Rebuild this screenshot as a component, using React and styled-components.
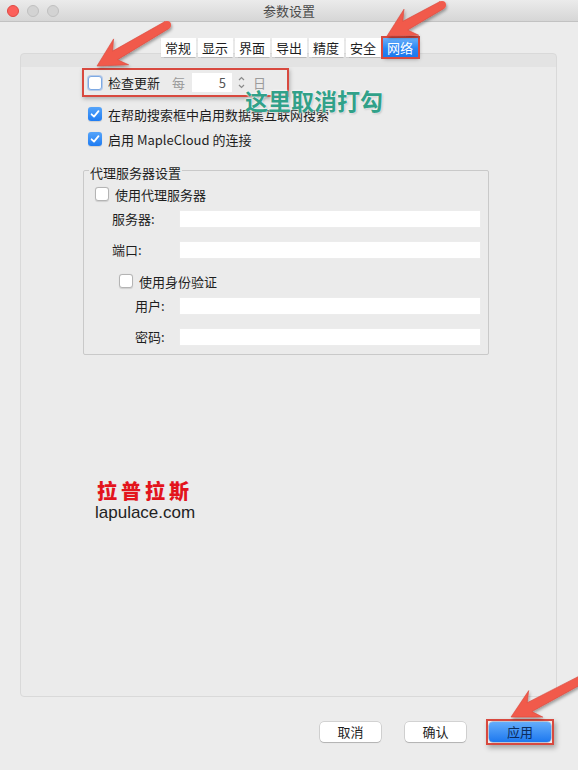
import React from "react";
import styled, { createGlobalStyle } from "styled-components";

const GlobalStyle = createGlobalStyle`
  html, body { margin: 0; padding: 0; background: #ececec; }
`;

const Window = styled.div`
  position: relative;
  width: 578px;
  height: 770px;
  overflow: hidden;
  display: flex;
  flex-direction: column;
  background: #ececec;
  font-family: "Noto Sans CJK SC", "Liberation Sans", sans-serif;
  font-size: 13px;
  color: #1e1e1e;
`;

const TitleBar = styled.div`
  height: 22px;
  box-sizing: border-box;
  display: grid;
  grid-template-columns: 1fr auto 1fr;
  align-items: center;
  background: linear-gradient(#ebebeb, #d6d6d6);
  border-bottom: 1px solid #c2c2c2;
`;

const Lights = styled.div`
  display: flex;
  gap: 8px;
  padding-left: 7px;
`;

const Light = styled.span`
  width: 12px;
  height: 12px;
  box-sizing: border-box;
  border-radius: 50%;
  background: ${(p) => (p.$red ? "#fc605b" : "#d3d3d3")};
  border: 1px solid ${(p) => (p.$red ? "#de4943" : "#c0c0c0")};
`;

const Title = styled.div`
  font-size: 13px;
  color: #4a4a4a;
  line-height: 22px;
`;

const Main = styled.div`
  flex: 1;
  display: flex;
  flex-direction: column;
  padding: 0 21px 0 20px;
`;

const TabRow = styled.div`
  position: relative;
  z-index: 1;
  display: flex;
  justify-content: center;
  gap: 2px;
  margin-top: 16px;
  height: 19px;
  padding-left: 1px;
`;

const Tab = styled.div`
  width: 35px;
  height: 19px;
  line-height: 19px;
  text-align: center;
  font-size: 13px;
  background: ${(p) => (p.$active ? "linear-gradient(#6bb1fb, #2a86f4 55%, #1c78ee)" : "#ffffff")};
  color: ${(p) => (p.$active ? "#ffffff" : "#1e1e1e")};
  box-shadow: ${(p) =>
    p.$active
      ? "0 0 0 2px #d8493f, 1px 2px 4px rgba(0,0,0,0.35)"
      : "0 0.5px 1px rgba(0,0,0,0.18)"};
`;

const Panel = styled.div`
  margin-top: -4px;
  height: 644px;
  box-sizing: border-box;
  border: 1px solid #d9d9d9;
  border-radius: 4px;
  background: linear-gradient(#e3e3e3 0, #e3e3e3 13px, #ebebeb 13px);
  padding: 14px 0 0 61px;
  display: flex;
  flex-direction: column;
`;

const Highlight = styled.div`
  display: flex;
  align-items: center;
  width: 207px;
  height: 29px;
  box-sizing: border-box;
  border: 2px solid #d8493f;
  box-shadow: 1px 2px 4px rgba(0, 0, 0, 0.25);
  padding-left: 4px;
`;

const CheckRow = styled.div`
  display: flex;
  align-items: center;
  height: 20px;
  padding-left: ${(p) => p.$indent || 0}px;
  margin-top: ${(p) => p.$top || 0}px;
`;

const Box = styled.span`
  flex: none;
  width: 14px;
  height: 14px;
  box-sizing: border-box;
  border-radius: 3px;
  display: flex;
  align-items: center;
  justify-content: center;
  background: ${(p) => (p.$checked ? "linear-gradient(#55a4fa, #1f7cf2)" : "#ffffff")};
  border: ${(p) =>
    p.$checked ? "none" : p.$focus ? "1px solid #7da9e3" : "1px solid #b4b4b4"};
  box-shadow: ${(p) =>
    p.$focus ? "0 0 0 1px rgba(120,165,230,0.45)" : "0 0.5px 1px rgba(0,0,0,0.12)"};
`;

const Label = styled.span`
  margin-left: 6px;
  white-space: nowrap;
`;

const Muted = styled.span`
  color: #9b9b9b;
  margin-left: ${(p) => p.$left || 0}px;
`;

const NumberBox = styled.div`
  margin-left: 7px;
  width: 40px;
  height: 19px;
  box-sizing: border-box;
  line-height: 19px;
  background: #fff;
  text-align: right;
  padding-right: 6px;
  color: #555;
`;

const Stepper = styled.div`
  margin-left: 4px;
  width: 11px;
  height: 19px;
  display: flex;
  align-items: center;
  justify-content: center;
`;

const Group = styled.fieldset`
  margin: 11px 0 0 1px;
  width: 406px;
  box-sizing: border-box;
  border: 1px solid #c9c9c9;
  border-radius: 2px;
  padding: 0 7px 8px 11px;
  min-inline-size: 0;
`;

const Legend = styled.legend`
  padding: 6px 1px 0;
  margin-left: -6px;
  line-height: 14px;
  font-size: 13px;
`;

const FieldRow = styled.div`
  display: flex;
  align-items: center;
  padding-left: ${(p) => p.$indent}px;
  margin-top: ${(p) => p.$top}px;
`;

const FieldLabel = styled.span`
  flex: 1;
  white-space: nowrap;
`;

const TextInput = styled.div`
  width: 302px;
  height: 18px;
  background: #ffffff;
  box-shadow: inset 0 0 0 1px #ececec;
`;

const Watermark = styled.div`
  margin-top: 124px;
  display: flex;
  flex-direction: column;
`;

const Brand = styled.div`
  padding-left: 15px;
  font-size: 20px;
  line-height: 24px;
  letter-spacing: 4px;
  font-weight: 900;
  color: #e3141c;
`;

const Site = styled.div`
  padding-left: 13px;
  font-family: "Liberation Sans", Arial, sans-serif;
  font-size: 17px;
  line-height: 20px;
  color: #222;
`;

const Footer = styled.div`
  display: flex;
  justify-content: flex-end;
  align-items: center;
  gap: 20px;
  margin-top: 22px;
  padding-right: 3px;

  & > :first-child {
    margin-right: 4px;
  }
`;

const Button = styled.div`
  width: ${(p) => (p.$primary ? 62 : 61)}px;
  height: 20px;
  box-sizing: border-box;
  line-height: 20px;
  text-align: center;
  font-size: 13px;
  border-radius: 4px;
  background: ${(p) => (p.$primary ? "linear-gradient(#64adfb, #1d78ef)" : "#ffffff")};
  color: ${(p) => (p.$primary ? "#0c2c5c" : "#1e1e1e")};
  box-shadow: ${(p) =>
    p.$primary
      ? "0 0 0 0.5px rgba(0,40,120,0.4)"
      : "0 0 0 0.5px rgba(0,0,0,0.22), 0 1px 1px rgba(0,0,0,0.15)"};
`;

const MarkFrame = styled.div`
  padding: 1px;
  border: 2px solid #d8493f;
  box-shadow: 2px 3px 5px rgba(0, 0, 0, 0.3);
`;

const Note = styled.div`
  position: absolute;
  left: 245px;
  top: 86px;
  font-size: 23px;
  line-height: 28px;
  font-weight: 700;
  color: #31a189;
  text-shadow: 0 0 2px #fff, 0 0 2px #fff, 1px 1px 2px rgba(0, 0, 0, 0.25);
  white-space: nowrap;
`;

const Overlay = styled.svg`
  position: absolute;
  left: 0;
  top: 0;
  pointer-events: none;
  z-index: 5;
`;

function Check() {
  return (
    <svg width="10" height="10" viewBox="0 0 10 10">
      <path d="M1.6 5.3 L4 7.6 L8.5 2.2" fill="none" stroke="#fff" strokeWidth="1.8" strokeLinecap="round" strokeLinejoin="round" />
    </svg>
  );
}

function CheckBox({ checked, focus }) {
  return (
    <Box $checked={checked} $focus={focus}>
      {checked && <Check />}
    </Box>
  );
}

function arrowPoints(tail, tip, head = 28, width = 30, shaft = 10, tailW = 8) {
  const dx = tip[0] - tail[0];
  const dy = tip[1] - tail[1];
  const len = Math.hypot(dx, dy);
  const ux = dx / len;
  const uy = dy / len;
  const nx = -uy;
  const ny = ux;
  const pt = (x, y) => `${x.toFixed(1)},${y.toFixed(1)}`;
  const jx = tip[0] - ux * (head - 7);
  const jy = tip[1] - uy * (head - 7);
  const bx = tip[0] - ux * head;
  const by = tip[1] - uy * head;
  return [
    pt(tail[0] + (nx * tailW) / 2, tail[1] + (ny * tailW) / 2),
    pt(jx + (nx * shaft) / 2, jy + (ny * shaft) / 2),
    pt(bx + (nx * width) / 2, by + (ny * width) / 2),
    pt(tip[0], tip[1]),
    pt(bx - (nx * width) / 2, by - (ny * width) / 2),
    pt(jx - (nx * shaft) / 2, jy - (ny * shaft) / 2),
    pt(tail[0] - (nx * tailW) / 2, tail[1] - (ny * tailW) / 2),
  ].join(" ");
}

const arrows = [
  { tail: [167, 25], tip: [97, 66] },
  { tail: [442, 5], tip: [387, 36] },
  { tail: [592, 674], tip: [511, 717] },
];

const tabs = ["常规", "显示", "界面", "导出", "精度", "安全", "网络"];

export default function App() {
  return (
    <Window>
      <GlobalStyle />
      <TitleBar>
        <Lights>
          <Light $red />
          <Light />
          <Light />
        </Lights>
        <Title>参数设置</Title>
        <div />
      </TitleBar>

      <Main>
        <TabRow>
          {tabs.map((t) => (
            <Tab key={t} $active={t === "网络"}>
              {t}
            </Tab>
          ))}
        </TabRow>

        <Panel>
          <Highlight>
            <CheckBox focus />
            <Label>检查更新</Label>
            <Muted $left={12}>每</Muted>
            <NumberBox>5</NumberBox>
            <Stepper>
              <svg width="9" height="17" viewBox="0 0 9 17">
                <path d="M2 6 L4.5 3.5 L7 6" fill="none" stroke="#8a8a8a" strokeWidth="1.2" />
                <path d="M2 11 L4.5 13.5 L7 11" fill="none" stroke="#8a8a8a" strokeWidth="1.2" />
              </svg>
            </Stepper>
            <Muted $left={6}>日</Muted>
          </Highlight>

          <CheckRow $indent={6} $top={7}>
            <CheckBox checked />
            <Label>在帮助搜索框中启用数据集互联网搜索</Label>
          </CheckRow>
          <CheckRow $indent={6} $top={5}>
            <CheckBox checked />
            <Label>启用 MapleCloud 的连接</Label>
          </CheckRow>

          <Group>
            <Legend>代理服务器设置</Legend>
            <CheckRow $top={4}>
              <CheckBox />
              <Label>使用代理服务器</Label>
            </CheckRow>
            <FieldRow $indent={17} $top={5}>
              <FieldLabel>服务器:</FieldLabel>
              <TextInput />
            </FieldRow>
            <FieldRow $indent={17} $top={12}>
              <FieldLabel>端口:</FieldLabel>
              <TextInput />
            </FieldRow>
            <CheckRow $indent={24} $top={12}>
              <CheckBox />
              <Label>使用身份验证</Label>
            </CheckRow>
            <FieldRow $indent={40} $top={5}>
              <FieldLabel>用户:</FieldLabel>
              <TextInput />
            </FieldRow>
            <FieldRow $indent={40} $top={12}>
              <FieldLabel>密码:</FieldLabel>
              <TextInput />
            </FieldRow>
          </Group>

          <Watermark>
            <Brand>拉普拉斯</Brand>
            <Site>lapulace.com</Site>
          </Watermark>
        </Panel>

        <Footer>
          <Button>取消</Button>
          <Button>确认</Button>
          <MarkFrame>
            <Button $primary>应用</Button>
          </MarkFrame>
        </Footer>
      </Main>

      <Note>这里取消打勾</Note>

      <Overlay width="578" height="770" viewBox="0 0 578 770">
        <defs>
          <filter id="sh" x="-20%" y="-20%" width="140%" height="140%">
            <feDropShadow dx="1" dy="2" stdDeviation="1.5" floodColor="#000" floodOpacity="0.35" />
          </filter>
        </defs>
        {arrows.map((a, i) => (
          <g key={i} filter="url(#sh)">
            <polygon points={arrowPoints(a.tail, a.tip)} fill="#f15a4b" stroke="#d9473b" strokeWidth="0.6" strokeLinejoin="round" />
            <circle cx={a.tail[0]} cy={a.tail[1]} r="4" fill="#f15a4b" />
          </g>
        ))}
      </Overlay>
    </Window>
  );
}
